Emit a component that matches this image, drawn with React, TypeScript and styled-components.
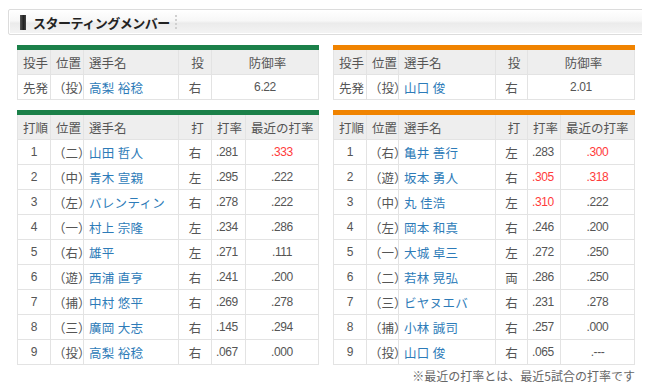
import * as React from "react";
import styled, { createGlobalStyle } from "styled-components";

const GlobalStyle = createGlobalStyle`
  body {
    margin: 8px;
    background: #fff;
    font-family: "Liberation Sans", "Noto Sans CJK JP", sans-serif;
    color: #555;
  }
`;

const Wrapper = styled.div`
  width: 636px;
`;

const TitleBar = styled.div`
  display: flex;
  align-items: center;
  height: 24px;
  margin-top: 1px;
  padding-left: 11px;
  border: 1px solid #dcdcdc;
  border-radius: 2px;
  background: linear-gradient(#ffffff 0%, #f7f7f7 45%, #ebebeb 55%, #f4f4f4 100%);
  box-shadow: inset 0 0 0 1px #fff;
`;

const TitleMark = styled.span`
  width: 6px;
  height: 15px;
  margin-right: 7px;
  background: linear-gradient(90deg, #555, #222 60%, #444);
`;

const TitleText = styled.span`
  font-family: "Noto Sans CJK JP", sans-serif;
  font-size: 13px;
  font-weight: bold;
  color: #222;
  letter-spacing: -0.5px;
`;

const TitleDots = styled.span`
  width: 0;
  height: 14px;
  margin-left: 5px;
  border-left: 2px dotted #d0d0d0;
`;

const Columns = styled.div`
  display: grid;
  grid-template-columns: 302px 302px;
  column-gap: 14px;
  padding: 10px 9px 0;
`;

const Side = styled.div`
  display: flex;
  flex-direction: column;
  gap: 10px;
`;

const Table = styled.table<{ $accent: string }>`
  width: 100%;
  border-collapse: collapse;
  table-layout: fixed;
  border-top: 5px solid ${(p) => p.$accent};
  font-size: 12px;
`;

const HeadCell = styled.th<{ $align?: string }>`
  height: 24px;
  padding: 0 0 0 5px;
  border: 1px solid #e3e3e3;
  background: #eeeeee;
  font-family: "Noto Sans CJK JP", sans-serif;
  font-weight: normal;
  font-size: 12.5px;
  color: #555;
  text-align: ${(p) => p.$align || "left"};
  white-space: nowrap;
  overflow: hidden;
`;

const Cell = styled.td<{ $align?: string; $red?: boolean; $pad?: number }>`
  height: 24px;
  padding: 0 0 0 ${(p) => (p.$pad !== undefined ? p.$pad : 5)}px;
  border: 1px solid #e3e3e3;
  background: #fff;
  color: ${(p) => (p.$red ? "#ff3b3b" : "#555")};
  text-align: ${(p) => p.$align || "left"};
  white-space: nowrap;
  letter-spacing: -0.4px;
`;

const JpCell = styled(Cell)`
  font-family: "Noto Sans CJK JP", sans-serif;
  font-size: 12.5px;
  letter-spacing: 0;
`;

const NameLink = styled.a`
  color: #2d7bb8;
  text-decoration: none;
  font-family: "Noto Sans CJK JP", sans-serif;
  font-size: 12.5px;
  letter-spacing: 0.3px;
`;

const Note = styled.div`
  margin-top: 2px;
  padding-right: 9px;
  text-align: right;
  font-family: "Noto Sans CJK JP", sans-serif;
  font-size: 12px;
  color: #666;
`;

interface IPitcher {
  role: string;
  pos: string;
  name: string;
  hand: string;
  era: string;
}

interface IBatter {
  order: number;
  pos: string;
  name: string;
  hand: string;
  avg: string;
  recent: string;
  avgRed?: boolean;
  recentRed?: boolean;
}

interface ITeam {
  accent: string;
  widths: number[];
  pitcher: IPitcher;
  batters: IBatter[];
}

const teams: ITeam[] = [
  {
    accent: "#1b8049",
    widths: [33, 33, 95, 33, 34],
    pitcher: { role: "先発", pos: "（投）", name: "高梨 裕稔", hand: "右", era: "6.22" },
    batters: [
      { order: 1, pos: "（二）", name: "山田 哲人", hand: "右", avg: ".281", recent: ".333", recentRed: true },
      { order: 2, pos: "（中）", name: "青木 宣親", hand: "左", avg: ".295", recent: ".222" },
      { order: 3, pos: "（左）", name: "バレンティン", hand: "右", avg: ".278", recent: ".222" },
      { order: 4, pos: "（一）", name: "村上 宗隆", hand: "左", avg: ".234", recent: ".286" },
      { order: 5, pos: "（右）", name: "雄平", hand: "左", avg: ".271", recent: ".111" },
      { order: 6, pos: "（遊）", name: "西浦 直亨", hand: "右", avg: ".241", recent: ".200" },
      { order: 7, pos: "（捕）", name: "中村 悠平", hand: "右", avg: ".269", recent: ".278" },
      { order: 8, pos: "（三）", name: "廣岡 大志", hand: "右", avg: ".145", recent: ".294" },
      { order: 9, pos: "（投）", name: "高梨 裕稔", hand: "右", avg: ".067", recent: ".000" },
    ],
  },
  {
    accent: "#f08300",
    widths: [33, 32, 97, 32, 33],
    pitcher: { role: "先発", pos: "（投）", name: "山口 俊", hand: "右", era: "2.01" },
    batters: [
      { order: 1, pos: "（右）", name: "亀井 善行", hand: "左", avg: ".283", recent: ".300", recentRed: true },
      { order: 2, pos: "（遊）", name: "坂本 勇人", hand: "右", avg: ".305", recent: ".318", avgRed: true, recentRed: true },
      { order: 3, pos: "（中）", name: "丸 佳浩", hand: "左", avg: ".310", recent: ".222", avgRed: true },
      { order: 4, pos: "（左）", name: "岡本 和真", hand: "右", avg: ".246", recent: ".200" },
      { order: 5, pos: "（一）", name: "大城 卓三", hand: "左", avg: ".272", recent: ".250" },
      { order: 6, pos: "（二）", name: "若林 晃弘", hand: "両", avg: ".286", recent: ".250" },
      { order: 7, pos: "（三）", name: "ビヤヌエバ", hand: "右", avg: ".231", recent: ".278" },
      { order: 8, pos: "（捕）", name: "小林 誠司", hand: "右", avg: ".257", recent: ".000" },
      { order: 9, pos: "（投）", name: "山口 俊", hand: "右", avg: ".065", recent: ".---" },
    ],
  },
];

const PitcherTable = ({ team }: { team: ITeam }) => {
  const { pitcher, widths } = team;
  return (
    <Table $accent={team.accent}>
      <colgroup>
        <col style={{ width: widths[0] }} />
        <col style={{ width: widths[1] }} />
        <col style={{ width: widths[2] }} />
        <col style={{ width: widths[3] }} />
        <col />
      </colgroup>
      <thead>
        <tr>
          <HeadCell>投手</HeadCell>
          <HeadCell>位置</HeadCell>
          <HeadCell>選手名</HeadCell>
          <HeadCell $align="center">投</HeadCell>
          <HeadCell $align="center">防御率</HeadCell>
        </tr>
      </thead>
      <tbody>
        <tr>
          <JpCell>{pitcher.role}</JpCell>
          <JpCell $pad={2}>{pitcher.pos}</JpCell>
          <Cell><NameLink href="#">{pitcher.name}</NameLink></Cell>
          <JpCell $align="center" $pad={0}>{pitcher.hand}</JpCell>
          <Cell $align="center" $pad={0}>{pitcher.era}</Cell>
        </tr>
      </tbody>
    </Table>
  );
};

const BatterTable = ({ team }: { team: ITeam }) => {
  const { widths } = team;
  return (
    <Table $accent={team.accent}>
      <colgroup>
        <col style={{ width: widths[0] }} />
        <col style={{ width: widths[1] }} />
        <col style={{ width: widths[2] }} />
        <col style={{ width: widths[3] }} />
        <col style={{ width: widths[4] }} />
        <col />
      </colgroup>
      <thead>
        <tr>
          <HeadCell>打順</HeadCell>
          <HeadCell>位置</HeadCell>
          <HeadCell>選手名</HeadCell>
          <HeadCell $align="center">打</HeadCell>
          <HeadCell>打率</HeadCell>
          <HeadCell>最近の打率</HeadCell>
        </tr>
      </thead>
      <tbody>
        {team.batters.map((b) => (
          <tr key={b.order}>
            <Cell $align="center" $pad={0}>{b.order}</Cell>
            <JpCell $pad={2}>{b.pos}</JpCell>
            <Cell><NameLink href="#">{b.name}</NameLink></Cell>
            <JpCell $align="center" $pad={0}>{b.hand}</JpCell>
            <Cell $pad={4} $red={b.avgRed}>{b.avg}</Cell>
            <Cell $align="center" $pad={0} $red={b.recentRed}>{b.recent}</Cell>
          </tr>
        ))}
      </tbody>
    </Table>
  );
};

export default function App() {
  return (
    <Wrapper>
      <GlobalStyle />
      <TitleBar>
        <TitleMark />
        <TitleText>スターティングメンバー</TitleText>
        <TitleDots />
      </TitleBar>
      <Columns>
        {teams.map((team) => (
          <Side key={team.accent}>
            <PitcherTable team={team} />
            <BatterTable team={team} />
          </Side>
        ))}
      </Columns>
      <Note>※最近の打率とは、最近5試合の打率です</Note>
    </Wrapper>
  );
}
